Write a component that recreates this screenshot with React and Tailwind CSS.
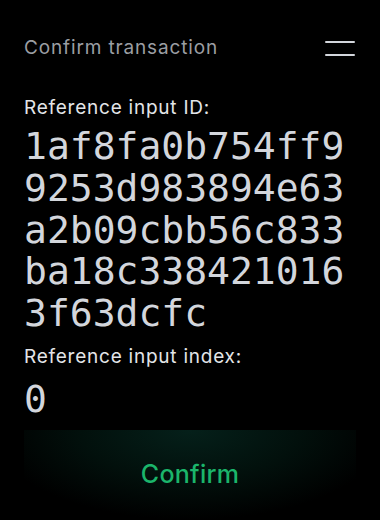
import React from 'react';

const hexLines = ['1af8fa0b754ff9', '9253d983894e63', 'a2b09cbb56c833', 'ba18c338421016', '3f63dcfc'];

const sans = { fontFamily: 'Inter, "Noto Sans", sans-serif' };
const mono = { fontFamily: '"DejaVu Sans Mono", "Liberation Mono", monospace' };

export default function App() {
  return (
    <div className="w-[380px] h-[520px] bg-black flex flex-col overflow-hidden" style={sans}>
      {/* Header */}
      <div className="flex items-center justify-between pl-6 pr-[25px] pt-[34px] h-[61px]">
        <h1 className="text-[19px] leading-[26px] tracking-[0.045em] text-[#9b9ea3] font-normal">Confirm transaction</h1>
        <button className="flex flex-col gap-[11px] w-[30px] mt-[1px]">
          <span className="block h-[2px] w-full rounded-full bg-[#d3d6dc]" />
          <span className="block h-[2px] w-full rounded-full bg-[#d3d6dc]" />
        </button>
      </div>

      {/* Body */}
      <div className="flex flex-col px-6 pt-[34px]">
        <p className="text-[19px] leading-[26px] tracking-[0.04em] text-[#e3e5e8]">Reference input ID:</p>
        <div className="mt-[5px] text-[38px] leading-[41.75px] text-[#d3d6dc] font-medium" style={mono}>
          {hexLines.map((l) => (
            <div key={l}>{l}</div>
          ))}
        </div>
        <p className="mt-[9px] text-[19px] leading-[26px] tracking-[0.04em] text-[#e3e5e8]">Reference input index:</p>
        <div className="mt-[8px] text-[38px] leading-[42px] text-[#d3d6dc] font-medium" style={mono}>0</div>
      </div>

      {/* Confirm button */}
      <div className="mt-auto h-[90px] mx-6 flex items-center justify-center bg-[radial-gradient(ellipse_60%_100%_at_50%_0%,#05201a_0%,#02100c_55%,#000_100%)]">
        <span className="text-[25px] tracking-[0.01em] text-[#1bb56b] font-medium">Confirm</span>
      </div>
    </div>
  );
}
